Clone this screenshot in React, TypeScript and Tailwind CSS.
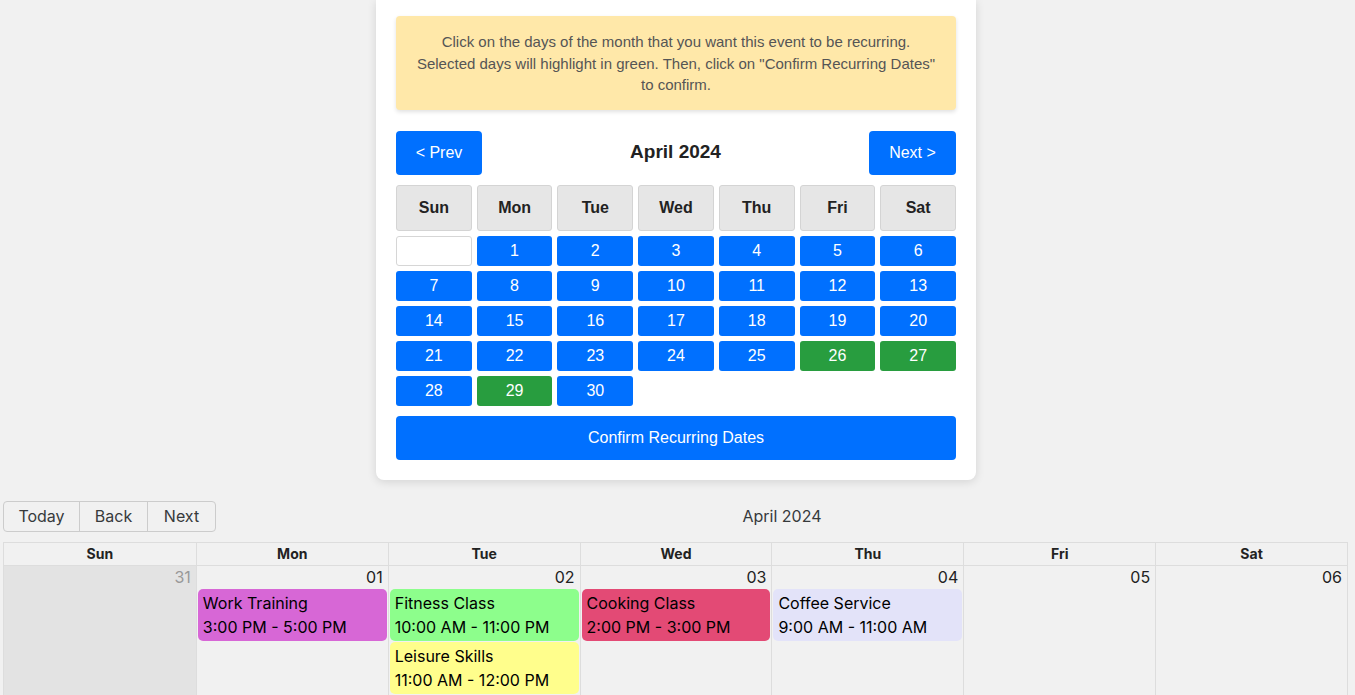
import React from "react";

const weekdays = ["Sun", "Mon", "Tue", "Wed", "Thu", "Fri", "Sat"];
const selected = [26, 27, 29];

type CalEvent = { title: string; time: string; color: string };

const monthRow: { day: string; off?: boolean; events: CalEvent[] }[] = [
  { day: "31", off: true, events: [] },
  { day: "01", events: [{ title: "Work Training", time: "3:00 PM - 5:00 PM", color: "bg-[#d767d6]" }] },
  {
    day: "02",
    events: [
      { title: "Fitness Class", time: "10:00 AM - 11:00 PM", color: "bg-[#8dfe8c]" },
      { title: "Leisure Skills", time: "11:00 AM - 12:00 PM", color: "bg-[#fffe8c]" },
    ],
  },
  { day: "03", events: [{ title: "Cooking Class", time: "2:00 PM - 3:00 PM", color: "bg-[#e34a75]" }] },
  { day: "04", events: [{ title: "Coffee Service", time: "9:00 AM - 11:00 AM", color: "bg-[#e3e3f9]" }] },
  { day: "05", events: [] },
  { day: "06", events: [] },
];

const RecurringPicker: React.FC = () => {
  const cells: (number | null)[] = [null];
  for (let d = 1; d <= 30; d++) cells.push(d);

  return (
    <div className="ml-[376px] w-[600px] rounded-b-lg bg-white px-5 pt-4 pb-5 shadow-[0_2px_10px_rgba(0,0,0,0.12)] font-['Liberation_Sans',Arial,sans-serif]">
      <div className="rounded bg-[#ffe8a9] px-4 pt-[15px] pb-[14px] text-center text-[15px] leading-[21.5px] text-[#555] shadow-[0_2px_4px_rgba(0,0,0,0.12)]">
        Click on the days of the month that you want this event to be recurring.
        <br />
        Selected days will highlight in green. Then, click on "Confirm Recurring Dates"
        <br />
        to confirm.
      </div>

      <div className="mt-[21px] flex items-center justify-between">
        <button className="h-[44px] w-[86px] rounded bg-[#0070ff] text-[16px] text-white">&lt; Prev</button>
        <h2 className="text-[19px] font-bold text-[#222]">April 2024</h2>
        <button className="h-[44px] w-[87px] rounded bg-[#0070ff] text-[16px] text-white">Next &gt;</button>
      </div>

      <div className="mt-[10px] grid grid-cols-7 gap-[5px]">
        {weekdays.map((w) => (
          <div
            key={w}
            className="flex h-[46px] items-center justify-center rounded-[3px] border border-[#d4d4d4] bg-[#e6e6e6] text-[16px] font-bold text-[#222]"
          >
            {w}
          </div>
        ))}
        {cells.map((d, i) =>
          d === null ? (
            <div key={i} className="h-[30px] rounded-[3px] border border-[#d6d6d6] bg-white" />
          ) : (
            <div
              key={i}
              className={
                selected.includes(d)
                  ? "flex h-[30px] items-center justify-center rounded-[3px] bg-[#289d3f] text-[16px] text-white"
                  : "flex h-[30px] items-center justify-center rounded-[3px] bg-[#0070ff] text-[16px] text-white"
              }
            >
              {d}
            </div>
          )
        )}
      </div>

      <button className="mt-[10px] h-[44px] w-full rounded bg-[#0070ff] text-[16px] text-white">
        Confirm Recurring Dates
      </button>
    </div>
  );
};

const BigCalendar: React.FC = () => {
  return (
    <div className="mt-[21px] ml-[3px] w-[1345px] font-['Inter',sans-serif] text-[#373a3c]">
      <div className="mb-[10px] flex items-center">
        <div className="flex text-[16px]">
          <button className="h-[31px] w-[77px] rounded-l border border-[#ccc]">Today</button>
          <button className="-ml-px h-[31px] w-[69px] border border-[#ccc]">Back</button>
          <button className="-ml-px h-[31px] w-[69px] rounded-r border border-[#ccc]">Next</button>
        </div>
        <div className="flex-1 text-center text-[16px]">April 2024</div>
      </div>

      <div className="border border-[#ddd]">
        <div className="grid grid-cols-7">
          {weekdays.map((w, i) => (
            <div
              key={w}
              className={
                i === 0
                  ? "h-[22px] text-center text-[14px] font-bold leading-[22px] text-[#222]"
                  : "h-[22px] border-l border-[#ddd] text-center text-[14px] font-bold leading-[22px] text-[#222]"
              }
            >
              {w}
            </div>
          ))}
        </div>
        <div className="grid grid-cols-7 border-t border-[#ddd]">
          {monthRow.map((c, i) => (
            <div
              key={c.day}
              className={
                (i === 0 ? "" : "border-l border-[#ddd] ") +
                (c.off ? "bg-[#e3e3e3] " : "") +
                "h-[160px]"
              }
            >
              <div
                className={
                  c.off
                    ? "h-[23px] pr-[5px] text-right text-[16px] leading-[23px] text-[#999]"
                    : "h-[23px] pr-[5px] text-right text-[16px] leading-[23px] text-[#222]"
                }
              >
                {c.day}
              </div>
              <div className="flex flex-col gap-[1px] px-px">
                {c.events.map((e) => (
                  <div key={e.title} className={"rounded-[5px] px-[5px] py-[2px] text-[16px] leading-[24px] text-black " + e.color}>
                    <div>{e.title}</div>
                    <div>{e.time}</div>
                  </div>
                ))}
              </div>
            </div>
          ))}
        </div>
      </div>
    </div>
  );
}

export default function App() {
  return (
    <div className="min-h-screen overflow-hidden bg-[#f1f1f1]">
      <RecurringPicker />
      <BigCalendar />
    </div>
  );
}
